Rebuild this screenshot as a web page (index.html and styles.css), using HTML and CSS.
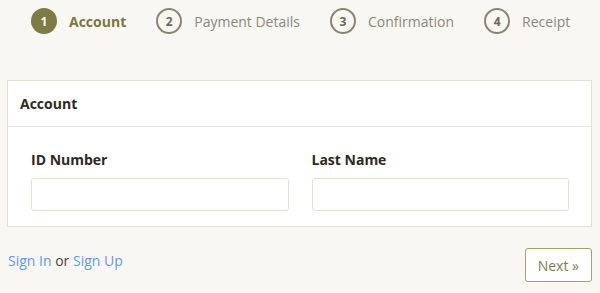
FILE: index.html
```html
<!DOCTYPE html>
<html lang="en">

<head>
    <meta charset="UTF-8">
    <meta name="viewport" content="width=device-width, initial-scale=1.0">
    <title>Account</title>
    <link rel="stylesheet" href="styles.css">
</head>

<body>
    <ul class="steps">
        <li class="step active"><span class="num">1</span>Account</li>
        <li class="step"><span class="num">2</span>Payment Details</li>
        <li class="step"><span class="num">3</span>Confirmation</li>
        <li class="step"><span class="num">4</span>Receipt</li>
    </ul>

    <div class="panel">
        <div class="panel-head">Account</div>
        <div class="panel-body">
            <div class="field">
                <label>ID Number</label>
                <input type="text">
            </div>
            <div class="field">
                <label>Last Name</label>
                <input type="text">
            </div>
        </div>
    </div>

    <div class="footer">
        <p class="links"><a href="#">Sign In</a> or <a href="#">Sign Up</a></p>
        <button class="next">Next &raquo;</button>
    </div>
</body>

</html>
```

FILE: styles.css
```css
body {
    margin: 0;
    padding: 7px 8px 0 7px;
    background: #f9f7f3;
    font-family: "Open Sans", "Noto Sans", sans-serif;
    font-size: 14px;
    color: #333;
}

/* steps */
.steps {
    list-style: none;
    margin: 0;
    padding: 0 0 0 24px;
    display: flex;
    align-items: center;
    height: 28px;
    gap: 30px;
}

.step {
    display: flex;
    align-items: center;
    gap: 12px;
    color: #8b877c;
    font-size: 14px;
}

.num {
    width: 22px;
    height: 22px;
    border: 2px solid #8d8474;
    border-radius: 50%;
    display: flex;
    align-items: center;
    justify-content: center;
    font-size: 12px;
    font-weight: bold;
    color: #6d6759;
}

.step.active {
    color: #7a773f;
    font-weight: bold;
}

.step.active .num {
    background: #7e7b47;
    border-color: #7e7b47;
    color: #fff;
}

/* panel */
.panel {
    margin-top: 45px;
    background: #fff;
    border: 1px solid #e6e0d3;
}

.panel-head {
    height: 45px;
    line-height: 45px;
    padding: 0 12px;
    font-weight: bold;
    color: #2f2a22;
    border-bottom: 1px solid #ebe6db;
}

.panel-body {
    display: flex;
    gap: 23px;
    padding: 23px 22px 15px 23px;
}

.field {
    flex: 1;
    display: flex;
    flex-direction: column;
}

.field label {
    font-weight: bold;
    font-size: 14px;
    color: #2f2a22;
    margin-bottom: 9px;
}

.field input {
    border: 1px solid #e6dfd0;
    border-radius: 3px;
    padding: 0;
    box-sizing: border-box;
    height: 33px;
    background: #fff;
}

/* footer */
.footer {
    display: flex;
    justify-content: space-between;
    align-items: flex-start;
    margin-top: 21px;
}

.links {
    margin: 3px 0 0 1px;
    font-size: 14px;
    color: #4a4235;
}

.links a {
    color: #5f9bf0;
    text-decoration: none;
}

.next {
    height: 34px;
    padding: 0 12px;
    background: #fff;
    border: 1px solid #a3a16f;
    border-radius: 3px;
    color: #7f7d48;
    font-family: "Open Sans", "Noto Sans", sans-serif;
    font-size: 14px;
}
```
